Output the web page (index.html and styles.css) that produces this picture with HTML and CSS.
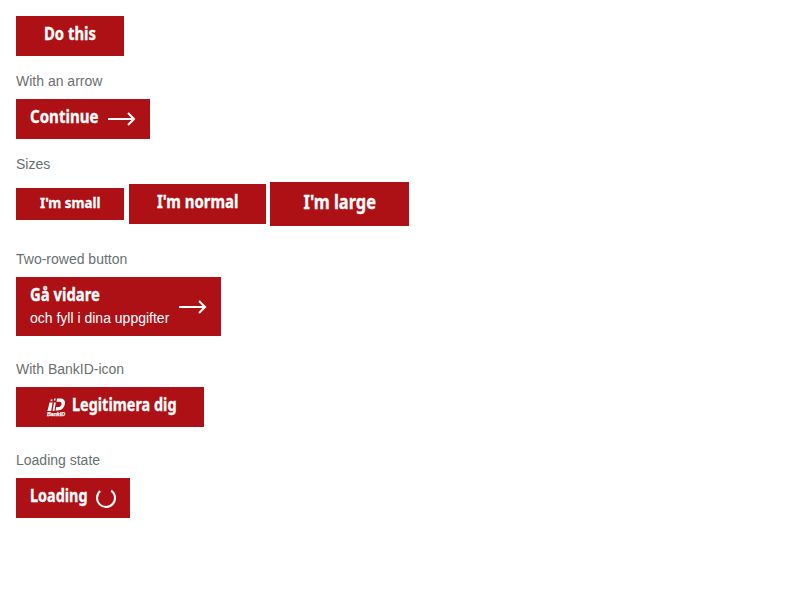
FILE: index.html
```html
<!DOCTYPE html>
<html lang="en">
<head>
<meta charset="utf-8">
<title>Buttons</title>
<link rel="stylesheet" href="styles.css">
</head>
<body>
<main>
  <button class="btn"><svg class="label" width="52" height="24"><text x="0" y="18" textLength="52" lengthAdjust="spacingAndGlyphs">Do this</text></svg></button>
  <p>With an arrow</p>
  <button class="btn start arrowed"><svg class="label" width="69" height="24"><text x="0" y="18" textLength="68.5" lengthAdjust="spacingAndGlyphs">Continue</text></svg><svg class="arrow" width="28" height="14" viewBox="0 0 28 14"><path d="M0 7H26M20 1l6 6-6 6"/></svg></button>
  <p>Sizes</p>
  <div class="sizes">
    <button class="btn small"><svg class="label" width="60" height="24"><text x="0" y="18" textLength="60.5" lengthAdjust="spacingAndGlyphs">I'm small</text></svg></button>
    <button class="btn normal"><svg class="label" width="81" height="24"><text x="0" y="18" textLength="81.5" lengthAdjust="spacingAndGlyphs">I'm normal</text></svg></button>
    <button class="btn large"><svg class="label" width="73" height="24"><text x="0.5" y="18" textLength="72.5" lengthAdjust="spacingAndGlyphs">I'm large</text></svg></button>
  </div>
  <p class="spaced">Two-rowed button</p>
  <button class="btn start two-row"><span class="rows"><svg class="label" width="70" height="24"><text x="0" y="18" textLength="70" lengthAdjust="spacingAndGlyphs">Gå vidare</text></svg><span class="sub">och fyll i dina uppgifter</span></span><svg class="arrow" width="28" height="14" viewBox="0 0 28 14"><path d="M0 7H26M20 1l6 6-6 6"/></svg></button>
  <p class="spaced">With BankID-icon</p>
  <button class="btn bank"><svg class="bankid" width="20" height="20" viewBox="0 0 20 20"><path d="M3.6 5.6H6.6L5.2 14H1.4zM8 5.6H9.8L8.4 14H6.6zM4.8 2.4H6.6L6.3 4.2H4.5zM8.3 1.4H9.7L9.3 3.6H7.9zM11 1.4h3c3.6 0 5.4 2 4.9 5.4-.6 4.3-3.6 6.6-7.4 6.6H9.6l.6-3.4h1.8c2.2 0 3.2-.9 3.5-2.8.2-1.6-.5-2.4-2.2-2.4h-2.8z"/><text x="1" y="19" textLength="18" lengthAdjust="spacingAndGlyphs">BankID</text></svg><svg class="label" width="105" height="24"><text x="0" y="18" textLength="104.5" lengthAdjust="spacingAndGlyphs">Legitimera dig</text></svg></button>
  <p class="spaced">Loading state</p>
  <button class="btn start loading"><svg class="label" width="58" height="24"><text x="0" y="18" textLength="57.5" lengthAdjust="spacingAndGlyphs">Loading</text></svg><svg class="spinner" width="20" height="20" viewBox="0 0 20 20"><path d="M4.2 3.1A9 9 0 1 0 15.2 2.6"/></svg></button>
</main>
</body>
</html>
```
FILE: styles.css
```css
body {
  margin: 16px;
  background: #fff;
  color: #6a7070;
  font: 14px/20px "Liberation Sans", Arial, sans-serif;
}
p { margin: 15px 0 8px; }
p.spaced { margin-top: 23px; }
.btn {
  display: flex;
  box-sizing: border-box;
  align-items: flex-start;
  justify-content: center;
  width: 108px;
  height: 40px;
  margin: 0;
  padding: 6px 0 0;
  border: 0;
  border-radius: 0;
  background: #ae1115;
  color: #fff;
}
.label {
  display: block;
  overflow: visible;
  fill: #fff;
  stroke: #fff;
  stroke-width: .3px;
  font: 700 17.5px "Noto Sans", sans-serif;
}
.start { justify-content: flex-start; padding-left: 14px; }
.arrow { fill: none; stroke: #fff; stroke-width: 2; }
.arrowed { width: 134px; }
.arrowed .arrow { margin: 7px 0 0 9px; }
.sizes { display: flex; align-items: center; }
.small { height: 32px; padding-top: 2px; }
.small .label { font-size: 15px; }
.normal { width: 137px; margin-left: 5px; }
.large { width: 139px; height: 44px; margin-left: 4px; padding-top: 9px; }
.large .label { font-size: 19px; }
.two-row { width: 205px; height: 59px; }
.rows { display: block; text-align: left; }
.sub {
  display: block;
  margin-top: 1px;
  font: 14px/20px "Liberation Sans", Arial, sans-serif;
  white-space: nowrap;
}
.two-row .arrow { margin: 17px 0 0 10px; }
.bank { width: 188px; padding-left: 2px; }
.bankid { margin: 4px 6px 0 0; fill: #fff; overflow: visible; }
.bankid text { font: italic 700 5.5px "Liberation Sans", sans-serif; stroke: #fff; stroke-width: .25px; }
.loading { width: 114px; }
.spinner {
  margin: 4px 0 0 8px;
  overflow: visible;
  fill: none;
  stroke: #fff;
  stroke-width: 2;
}
```
